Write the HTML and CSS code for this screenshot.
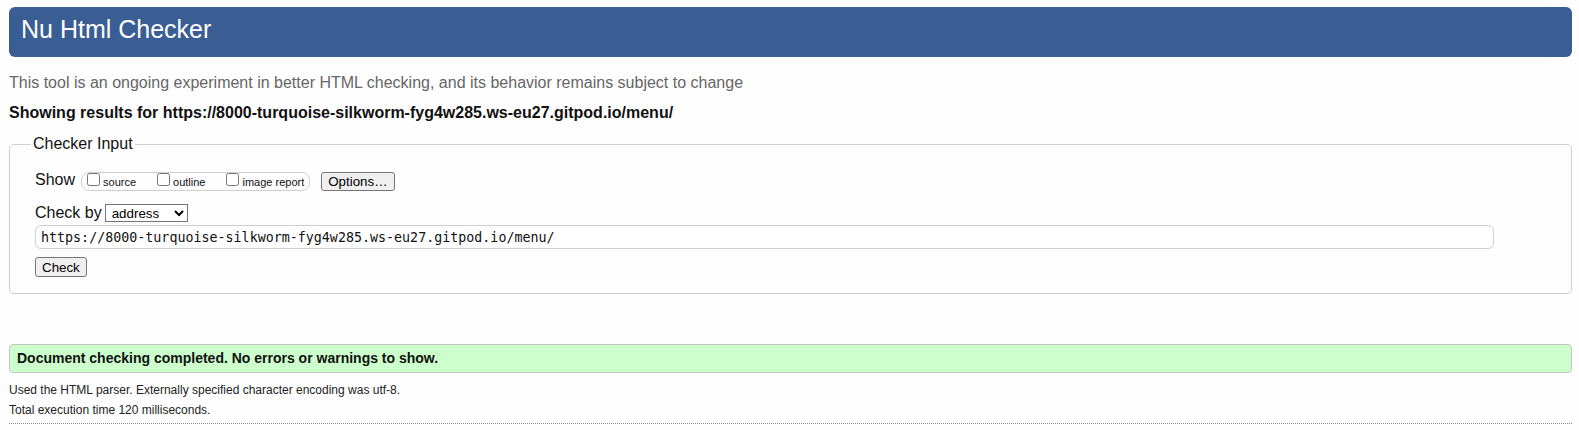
FILE: index.html
```html
<!DOCTYPE html>
<html lang="en">
<head>
<meta charset="utf-8">
<title>Nu Html Checker</title>
<link rel="stylesheet" href="styles.css">
</head>
<body>
<h1 class="title">Nu Html Checker</h1>
<p class="intro">This tool is an ongoing experiment in better HTML checking, and its behavior remains subject to change</p>
<p class="target">Showing results for https://8000-turquoise-silkworm-fyg4w285.ws-eu27.gitpod.io/menu/</p>
<form class="checker">
  <fieldset class="input-box">
    <legend class="legend">Checker Input</legend>
    <div class="row-show">
      <span class="row-label">Show</span>
      <span class="show-group">
        <label class="opt"><input class="cb" type="checkbox"><span>source</span></label>
        <label class="opt"><input class="cb" type="checkbox"><span>outline</span></label>
        <label class="opt"><input class="cb" type="checkbox"><span>image report</span></label>
      </span>
      <button type="button" class="btn btn-options">Options…</button>
    </div>
    <div class="row-by">
      <label class="by-label" for="docselect">Check by</label>
      <select class="sel" id="docselect"><option>address</option></select>
    </div>
    <input class="url" type="url" value="https://8000-turquoise-silkworm-fyg4w285.ws-eu27.gitpod.io/menu/">
    <div class="row-submit">
      <button type="button" class="btn">Check</button>
    </div>
  </fieldset>
</form>
<div class="success">Document checking completed. No errors or warnings to show.</div>
<p class="details">Used the HTML parser. Externally specified character encoding was utf-8.</p>
<p class="details">Total execution time 120 milliseconds.</p>
<hr class="rule">
</body>
</html>
```
FILE: styles.css
```css
html {
  background: #fefefe;
}
body {
  margin: 0;
  padding: 7px 7px 0 9px;
  font-family: "Liberation Sans", Arial, sans-serif;
  color: #111;
}
.title {
  margin: 0;
  height: 50px;
  box-sizing: border-box;
  padding: 2px 12px 8px;
  line-height: 40px;
  font-size: 25px;
  font-weight: normal;
  color: #fff;
  background: #3a5e94;
  border-radius: 6px;
}
.intro {
  margin: 17px 0 0;
  font-size: 16px;
  line-height: 18px;
  color: #666;
}
.target {
  margin: 12px 0 0;
  font-size: 16px;
  line-height: 18px;
  font-weight: bold;
  color: #111;
}
.checker {
  margin: 13px 0 0;
}
.input-box {
  margin: 0;
  min-width: 0;
  padding: 18px 25px 16px;
  border: 1px solid #cfcfcf;
  border-radius: 5px;
}
.legend {
  padding: 0 2px;
  margin-left: -4px;
  font-size: 16px;
  line-height: 18px;
  color: #111;
}
.row-show {
  display: flex;
  align-items: center;
  height: 20px;
}
.row-label {
  font-size: 16px;
  line-height: 16px;
  margin-bottom: 3px;
}
.show-group {
  display: flex;
  align-items: flex-start;
  height: 19px;
  box-sizing: border-box;
  margin-left: 6px;
  padding: 0 5px 0 1px;
  border: 1px solid #cfcfcf;
  border-radius: 8px;
  font-size: 11px;
}
.opt {
  display: flex;
  align-items: baseline;
  margin-right: 17px;
  line-height: 13px;
}
.opt:last-child {
  margin-right: 0;
}
.cb {
  width: 13px;
  height: 13px;
  margin: 0 3px 0 4px;
}
.btn {
  height: 19px;
  box-sizing: border-box;
  padding: 0 6px;
  font-family: "Liberation Sans", Arial, sans-serif;
  font-size: 13.33px;
  line-height: 17px;
  color: #000;
  background: #efefef;
  border: 1px solid #767676;
  border-radius: 3px;
}
.btn-options {
  margin-left: 11px;
}
.row-by {
  display: flex;
  align-items: center;
  height: 18px;
  margin-top: 13px;
}
.by-label {
  font-size: 16px;
  line-height: 18px;
}
.sel {
  width: 83px;
  height: 18px;
  margin-left: 3px;
  padding: 0 0 0 2px;
  font-family: "Liberation Sans", Arial, sans-serif;
  font-size: 13.33px;
  color: #000;
  background: #fff;
  border: 1px solid #767676;
  border-radius: 0;
}
.url {
  display: block;
  width: 1459px;
  height: 24px;
  box-sizing: border-box;
  margin: 3px 0 0;
  padding: 0 5px;
  font-family: "DejaVu Sans Mono", "Liberation Mono", monospace;
  font-size: 13.33px;
  color: #111;
  background: #fff;
  border: 1px solid #cfcfcf;
  border-radius: 6px;
}
.row-submit {
  margin-top: 8px;
  display: flex;
}
.row-submit .btn {
  height: 20px;
}
.success {
  margin-top: 50px;
  height: 29px;
  box-sizing: border-box;
  padding: 0 7px;
  font-size: 14px;
  line-height: 27px;
  font-weight: bold;
  color: #111;
  background: #ccffcc;
  border: 1px solid #c4c4c4;
  border-radius: 4px;
}
.details {
  margin: 0;
  font-size: 12px;
  line-height: 20px;
  color: #222;
}
.success + .details {
  margin-top: 7px;
}
.rule {
  margin: 3px 0 0;
  height: 0;
  border: 0;
  border-top: 1px dotted #888;
}
```
